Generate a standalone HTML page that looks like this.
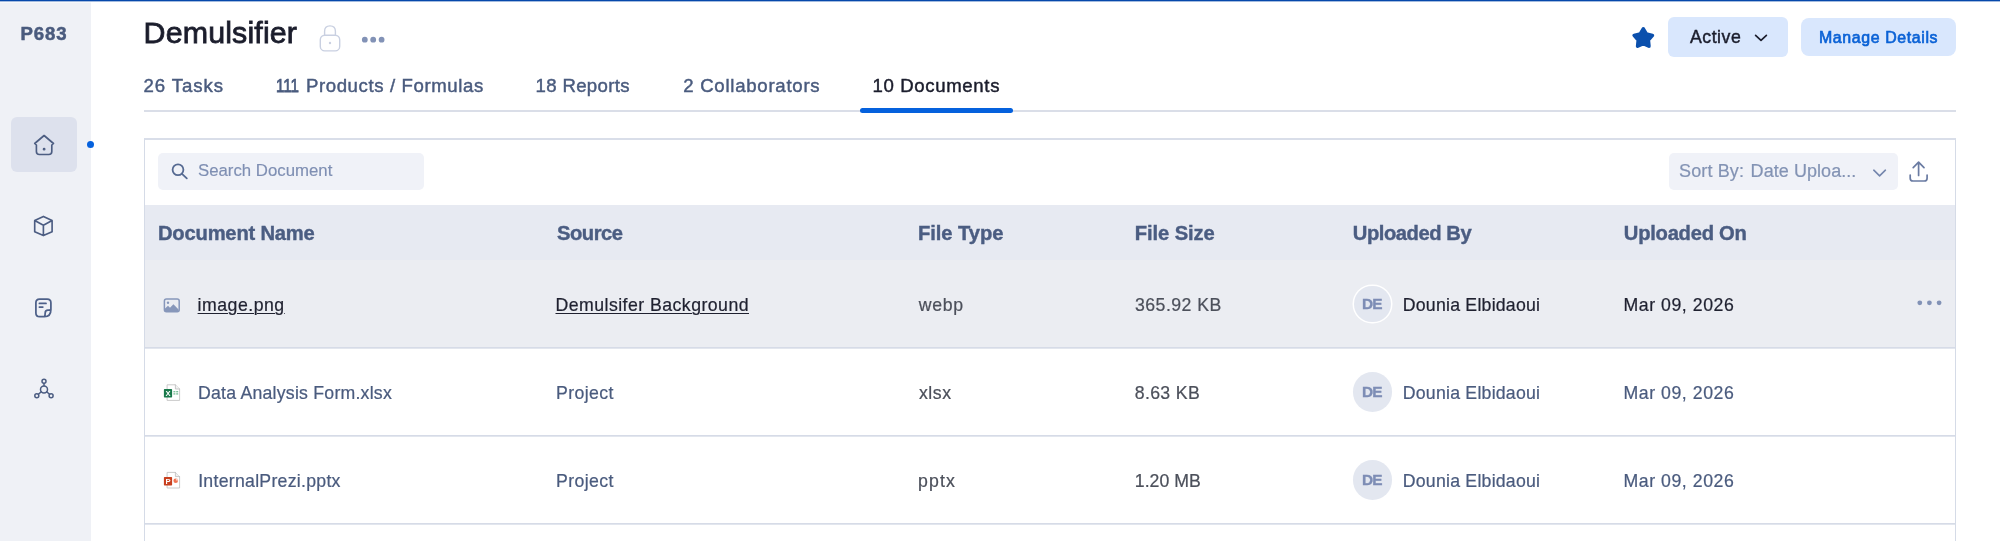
<!DOCTYPE html>
<html lang="en">
<head>
<meta charset="utf-8">
<title>Demulsifier – Documents</title>
<style>
*{box-sizing:border-box;margin:0;padding:0}
html,body{width:2000px;height:541px;overflow:hidden;background:#fff}
body{position:relative;font-family:"Liberation Sans",sans-serif;color:#4a5b7e}
#root{position:absolute;left:0;top:0;width:2000px;height:541px;will-change:transform}
.abs{position:absolute}
.t{position:absolute;white-space:nowrap;line-height:1}
svg{position:absolute;overflow:visible}
#topbar{left:0;top:0;width:2000px;height:2px;background:linear-gradient(#0648ab 0,#0648ab 1px,#a3bbdf 1px,#a3bbdf 2px)}
#side{left:0;top:2px;width:90.5px;height:539px;background:#eff1f6;border-top:1px solid #f7f8fa}
#navact{left:11px;top:117px;width:66px;height:55px;background:#dde1ed;border-radius:6px}
#dot{left:86.5px;top:140.5px;width:7.6px;height:7.6px;border-radius:50%;background:#0561dd}
#tabline{left:144px;top:110px;width:1812px;height:2px;background:#dadee8}
#tabon{left:860px;top:108px;width:153px;height:5px;background:#0561dd;border-radius:2.5px}
#active{left:1668px;top:17.3px;width:119.6px;height:39.3px;background:#d9e7fd;border-radius:6px}
#manage{left:1801px;top:18.2px;width:155px;height:38.2px;background:#d9e7fd;border-radius:8px}
#card{left:144px;top:138px;width:1812px;height:420px;border:1px solid #d5dbe7;border-top:2px solid #d9dee9;background:#fff}
#search{left:158.4px;top:153px;width:266px;height:37px;background:#f0f2f8;border-radius:5px}
#sort{left:1669px;top:153px;width:228.6px;height:37px;background:#f0f2f8;border-radius:5px}
#thead{left:145px;top:205px;width:1810px;height:55px;background:#e7eaf2}
#row1{left:145px;top:260px;width:1810px;height:87px;background:#ebedf2}
.hl{left:145px;width:1810px;height:2px;background:linear-gradient(#d6dbe7 0,#d6dbe7 1px,#e2e6ee 1px,#e2e6ee 2px)}
.u{text-decoration:underline;text-underline-offset:2px;text-decoration-thickness:1px}
.av{position:absolute;left:1352.6px;width:39.6px;height:39.6px;border-radius:50%;background:#e3e7f0}
.av1{left:1354.1px;width:36.6px;height:36.6px;margin-top:1.5px;box-shadow:0 0 0 1.5px #fff}
</style>
</head>
<body>
<div id="root">
<div class="abs" id="side"></div>
<div class="abs" id="topbar"></div>
<div class="t" style="left:20.5px;top:24.51px;font-size:18.6px;letter-spacing:0.93px;color:#4a5b7e;font-weight:700;-webkit-text-stroke:0.5px #4a5b7e">P683</div>
<div class="abs" id="navact"></div>
<div class="abs" id="dot"></div>

<div class="t" style="left:143.6px;top:17.27px;font-size:30.4px;letter-spacing:0.14px;color:#1b1d2c;-webkit-text-stroke:0.8px #1b1d2c">Demulsifier</div>

<div class="t" style="left:143.4px;top:76.51px;font-size:18.6px;letter-spacing:0.94px;color:#4a5b7e;-webkit-text-stroke:0.45px #4a5b7e">26 Tasks</div>
<div class="t" style="left:276.4px;top:76.51px;font-size:18.6px;letter-spacing:0.0px;color:#4a5b7e;transform:scaleX(0.815);transform-origin:0 0;-webkit-text-stroke:0.75px #4a5b7e">111</div>
<div class="t" style="left:305.9px;top:76.51px;font-size:18.6px;letter-spacing:0.61px;color:#4a5b7e;-webkit-text-stroke:0.45px #4a5b7e">Products / Formulas</div>
<div class="t" style="left:535.6px;top:76.51px;font-size:18.6px;letter-spacing:0.33px;color:#4a5b7e;-webkit-text-stroke:0.45px #4a5b7e">18 Reports</div>
<div class="t" style="left:683.2px;top:76.51px;font-size:18.6px;letter-spacing:0.74px;color:#4a5b7e;-webkit-text-stroke:0.45px #4a5b7e">2 Collaborators</div>
<div class="t" style="left:872.5px;top:76.51px;font-size:18.6px;letter-spacing:0.64px;color:#1b1d2c;-webkit-text-stroke:0.45px #1b1d2c">10 Documents</div>
<div class="abs" id="tabline"></div>
<div class="abs" id="tabon"></div>

<div class="abs" id="active"></div>
<div class="t" style="left:1690.0px;top:28.52px;font-size:17.7px;letter-spacing:0.52px;color:#1b1d2c;-webkit-text-stroke:0.45px #1b1d2c">Active</div>
<div class="abs" id="manage"></div>
<div class="t" style="left:1819.0px;top:29.54px;font-size:15.9px;letter-spacing:0.62px;color:#0b62d6;-webkit-text-stroke:0.65px #0b62d6">Manage Details</div>

<div class="abs" id="card"></div>
<div class="abs" id="search"></div>
<div class="t" style="left:198.0px;top:162.53px;font-size:16.8px;letter-spacing:0.0px;color:#7f8fb3;-webkit-text-stroke:0.15px #7f8fb3">Search Document</div>
<div class="abs" id="sort"></div>
<div class="t" style="left:1679.0px;top:161.76px;font-size:18.0px;letter-spacing:0.14px;color:#8393b4;-webkit-text-stroke:0.2px #8393b4">Sort By:</div>
<div class="t" style="left:1750.6px;top:161.76px;font-size:18.0px;letter-spacing:0.06px;color:#8393b4;-webkit-text-stroke:0.2px #8393b4">Date Uploa...</div>

<div class="abs" id="thead"></div>
<div class="t" style="left:158.0px;top:222.9px;font-size:20.2px;letter-spacing:-0.21px;color:#4b5d82;font-weight:700;-webkit-text-stroke:0.4px #4b5d82">Document Name</div>
<div class="t" style="left:557.0px;top:222.9px;font-size:20.2px;letter-spacing:-0.5px;color:#4b5d82;font-weight:700;-webkit-text-stroke:0.4px #4b5d82">Source</div>
<div class="t" style="left:918.0px;top:222.9px;font-size:20.2px;letter-spacing:-0.06px;color:#4b5d82;font-weight:700;-webkit-text-stroke:0.4px #4b5d82">File Type</div>
<div class="t" style="left:1134.8px;top:222.9px;font-size:20.2px;letter-spacing:-0.1px;color:#4b5d82;font-weight:700;-webkit-text-stroke:0.4px #4b5d82">File Size</div>
<div class="t" style="left:1352.8px;top:222.9px;font-size:20.2px;letter-spacing:-0.45px;color:#4b5d82;font-weight:700;-webkit-text-stroke:0.4px #4b5d82">Uploaded By</div>
<div class="t" style="left:1623.8px;top:222.9px;font-size:20.2px;letter-spacing:-0.25px;color:#4b5d82;font-weight:700;-webkit-text-stroke:0.4px #4b5d82">Uploaded On</div>

<div class="abs" id="row1"></div>
<div class="abs hl" style="top:347px"></div>
<div class="abs hl" style="top:435px"></div>
<div class="abs hl" style="top:523px"></div>

<div class="av av1" style="top:284px"></div>
<div class="av" style="top:372px"></div>
<div class="av" style="top:460px"></div>
<div class="t u" style="left:197.6px;top:296.52px;font-size:17.7px;letter-spacing:0.5px;color:#1f2130;-webkit-text-stroke:0.22px #1f2130">image.png</div>
<div class="t u" style="left:555.5px;top:296.52px;font-size:17.7px;letter-spacing:0.46px;color:#1f2130;-webkit-text-stroke:0.22px #1f2130">Demulsifer Background</div>
<div class="t" style="left:918.7px;top:296.52px;font-size:17.7px;letter-spacing:0.7px;color:#4c505b;-webkit-text-stroke:0.22px #4c505b">webp</div>
<div class="t" style="left:1135.0px;top:296.52px;font-size:17.7px;letter-spacing:0.47px;color:#4c505b;-webkit-text-stroke:0.22px #4c505b">365.92 KB</div>
<div class="t" style="left:1402.8px;top:296.52px;font-size:17.7px;letter-spacing:0.23px;color:#1f2130;-webkit-text-stroke:0.22px #1f2130">Dounia Elbidaoui</div>
<div class="t" style="left:1623.5px;top:296.52px;font-size:17.7px;letter-spacing:0.55px;color:#1f2130;-webkit-text-stroke:0.22px #1f2130">Mar 09, 2026</div>
<div class="t" style="left:198.0px;top:384.52px;font-size:17.7px;letter-spacing:0.23px;color:#4a5b7e;-webkit-text-stroke:0.22px #4a5b7e">Data Analysis Form.xlsx</div>
<div class="t" style="left:556.0px;top:384.52px;font-size:17.7px;letter-spacing:0.38px;color:#4a5b7e;-webkit-text-stroke:0.22px #4a5b7e">Project</div>
<div class="t" style="left:919.0px;top:384.52px;font-size:17.7px;letter-spacing:0.53px;color:#4c505b;-webkit-text-stroke:0.22px #4c505b">xlsx</div>
<div class="t" style="left:1134.8px;top:384.52px;font-size:17.7px;letter-spacing:0.33px;color:#4c505b;-webkit-text-stroke:0.22px #4c505b">8.63 KB</div>
<div class="t" style="left:1402.8px;top:384.52px;font-size:17.7px;letter-spacing:0.23px;color:#4a5b7e;-webkit-text-stroke:0.22px #4a5b7e">Dounia Elbidaoui</div>
<div class="t" style="left:1623.5px;top:384.52px;font-size:17.7px;letter-spacing:0.55px;color:#4a5b7e;-webkit-text-stroke:0.22px #4a5b7e">Mar 09, 2026</div>
<div class="t" style="left:198.2px;top:472.52px;font-size:17.7px;letter-spacing:0.27px;color:#4a5b7e;-webkit-text-stroke:0.22px #4a5b7e">InternalPrezi.pptx</div>
<div class="t" style="left:556.0px;top:472.52px;font-size:17.7px;letter-spacing:0.38px;color:#4a5b7e;-webkit-text-stroke:0.22px #4a5b7e">Project</div>
<div class="t" style="left:918.0px;top:472.52px;font-size:17.7px;letter-spacing:1.13px;color:#4c505b;-webkit-text-stroke:0.22px #4c505b">pptx</div>
<div class="t" style="left:1134.8px;top:472.52px;font-size:17.7px;letter-spacing:0.03px;color:#4c505b;-webkit-text-stroke:0.22px #4c505b">1.20 MB</div>
<div class="t" style="left:1402.8px;top:472.52px;font-size:17.7px;letter-spacing:0.23px;color:#4a5b7e;-webkit-text-stroke:0.22px #4a5b7e">Dounia Elbidaoui</div>
<div class="t" style="left:1623.5px;top:472.52px;font-size:17.7px;letter-spacing:0.55px;color:#4a5b7e;-webkit-text-stroke:0.22px #4a5b7e">Mar 09, 2026</div>
<div class="t" style="left:1362.0px;top:295.96px;font-size:15.4px;letter-spacing:-0.9px;color:#7d8db5;font-weight:700;-webkit-text-stroke:0.35px #7d8db5">DE</div>
<div class="t" style="left:1362.0px;top:383.96px;font-size:15.4px;letter-spacing:-0.9px;color:#7d8db5;font-weight:700;-webkit-text-stroke:0.35px #7d8db5">DE</div>
<div class="t" style="left:1362.0px;top:471.96px;font-size:15.4px;letter-spacing:-0.9px;color:#7d8db5;font-weight:700;-webkit-text-stroke:0.35px #7d8db5">DE</div>

<svg width="2000" height="541" viewBox="0 0 2000 541" style="left:0;top:0" fill="none" stroke-linecap="round" stroke-linejoin="round">
<!-- sidebar: home -->
<g stroke="#4c5d82" stroke-width="1.65">
<path d="M36.4 145 L34.7 143.5 L44.1 135.5 L53.5 143.5 L51.8 145 L51.8 151.5 Q51.8 154.5 48.8 154.5 L39.4 154.5 Q36.4 154.5 36.4 151.5 Z"/>
<circle cx="44.1" cy="149.2" r="0.6" fill="#4a5b7e"/>
<!-- cube -->
<path d="M43.4 216.4 L52.1 220.5 L52.1 231.8 L43.4 235.6 L34.7 231.8 L34.7 220.5 Z M34.7 220.5 L43.4 225.2 L52.1 220.5 M43.4 225.2 L43.4 235.6"/>
</g>
<!-- note -->
<g stroke="#4d6089" stroke-width="1.75">
<path d="M44.4 316.7 L39.6 316.7 Q35.9 316.7 35.9 313 L35.9 302.7 Q35.9 299 39.6 299 L47.2 299 Q50.9 299 50.9 302.7 L50.9 309.5 Q50.9 316.7 44.4 316.7 Q45.2 315.6 45.2 313 Q45.2 310.2 48 310.2 Q50.2 310.2 50.9 309.3"/>
<path d="M39.4 303.4 L46 303.4 M39.4 307 L42.8 307"/>
</g>
<!-- network -->
<g stroke="#4c5d82" stroke-width="1.5">
<circle cx="44" cy="389.4" r="3.5"/>
<circle cx="44" cy="381.3" r="2"/>
<circle cx="36.8" cy="395.7" r="2"/>
<circle cx="51.1" cy="395.7" r="2"/>
<path d="M44 383.4 L44 385.8 M41.3 391.7 L38.4 394.3 M46.7 391.7 L49.5 394.3"/>
</g>
<!-- lock -->
<g stroke="#c9d0e1" stroke-width="1.4">
<path d="M324.6 35.3 L324.6 31.2 Q324.6 25.9 330 25.9 Q335.4 25.9 335.4 31.2 L335.4 35.3"/>
<rect x="320.3" y="35.3" width="19.4" height="15.6" rx="4.5"/>
<circle cx="330" cy="43" r="0.5" fill="#c9d0e1"/>
</g>
<!-- title dots -->
<g fill="#8292b6" stroke="none">
<circle cx="364.8" cy="39.7" r="2.9"/><circle cx="373.2" cy="39.7" r="2.9"/><circle cx="381.6" cy="39.7" r="2.9"/>
</g>
<!-- star -->
<polygon points="1643.30,28.80 1646.42,34.11 1652.43,35.43 1648.34,40.04 1648.94,46.17 1643.30,43.70 1637.66,46.17 1638.26,40.04 1634.17,35.43 1640.18,34.11" fill="#0b50ad" stroke="#0b50ad" stroke-width="3.6"/>
<!-- active chevron -->
<path d="M1755.6 35.4 L1761 40.4 L1766.4 35.4" stroke="#1b1d2c" stroke-width="1.7"/>
<!-- search icon -->
<g stroke="#566a92" stroke-width="1.8">
<circle cx="178" cy="169.8" r="5.4"/>
<path d="M182 173.8 L186.8 178.4"/>
</g>
<!-- sort chevron -->
<path d="M1873.8 170.2 L1879.6 175.8 L1885.4 170.2" stroke="#7486ad" stroke-width="1.6"/>
<!-- upload -->
<g stroke="#6a7ba2" stroke-width="1.7">
<path d="M1918.6 175.5 L1918.6 162.3 M1913.2 167.6 L1918.6 162.2 L1924 167.6"/>
<path d="M1910.2 175 L1910.2 178.2 Q1910.2 181 1913 181 L1924.3 181 Q1927.1 181 1927.1 178.2 L1927.1 175"/>
</g>
<!-- row dots -->
<g fill="#8292b6" stroke="none">
<circle cx="1919.8" cy="302.8" r="2.4"/><circle cx="1929.4" cy="302.8" r="2.4"/><circle cx="1939.1" cy="302.8" r="2.4"/>
</g>
<!-- image file icon -->
<g>
<rect x="164.4" y="299.1" width="14.8" height="12.7" rx="2" stroke="#8797ba" stroke-width="1.5"/>
<circle cx="168" cy="302.8" r="1.2" fill="#8797ba" stroke="none"/>
<path d="M165 311 L165 308.6 L168 305.8 L170 307.8 L173.4 304.2 L178.6 309.6 L178.6 311 Z" fill="#8797ba" stroke="none"/>
</g>
<!-- excel icon -->
<g stroke-linejoin="miter">
<path d="M167.5 384.8 L175.4 384.8 L179.6 389 L179.6 400.4 L167.5 400.4 Z" fill="#fff" stroke="#bcbcbc" stroke-width="0.8"/>
<path d="M175.4 384.8 L175.4 389 L179.6 389" fill="#f1f1f1" stroke="#bcbcbc" stroke-width="0.8"/>
<g fill="#7dbf9b" stroke="none"><rect x="173.4" y="391" width="2" height="1.4"/><rect x="176.2" y="391" width="2" height="1.4"/><rect x="173.4" y="393.2" width="2" height="1.4"/><rect x="176.2" y="393.2" width="2" height="1.4"/></g>
<rect x="163.9" y="389" width="8.2" height="8.4" rx="0.7" fill="#18794a" stroke="none"/>
<text x="168" y="396.2" font-family="Liberation Sans, sans-serif" font-weight="700" font-size="7.6" fill="#fff" stroke="none" text-anchor="middle">X</text>
</g>
<!-- ppt icon -->
<g stroke-linejoin="miter">
<path d="M167.5 472.4 L175.4 472.4 L179.6 476.6 L179.6 488 L167.5 488 Z" fill="#fff" stroke="#bcbcbc" stroke-width="0.8"/>
<path d="M175.4 472.4 L175.4 476.6 L179.6 476.6" fill="#f1f1f1" stroke="#bcbcbc" stroke-width="0.8"/>
<circle cx="175.7" cy="480.8" r="2.3" fill="#ef7352" stroke="none"/>
<path d="M175.9 478.2 A2.4 2.4 0 0 1 178.3 480.6 L175.9 480.6 Z" fill="#fbd0c2" stroke="none"/>
<rect x="163.9" y="477" width="8.2" height="8.4" rx="0.7" fill="#c8401f" stroke="none"/>
<text x="168.1" y="484.1" font-family="Liberation Sans, sans-serif" font-weight="700" font-size="7.6" fill="#fff" stroke="none" text-anchor="middle">P</text>
</g>
</svg>

</div>
</body>
</html>
